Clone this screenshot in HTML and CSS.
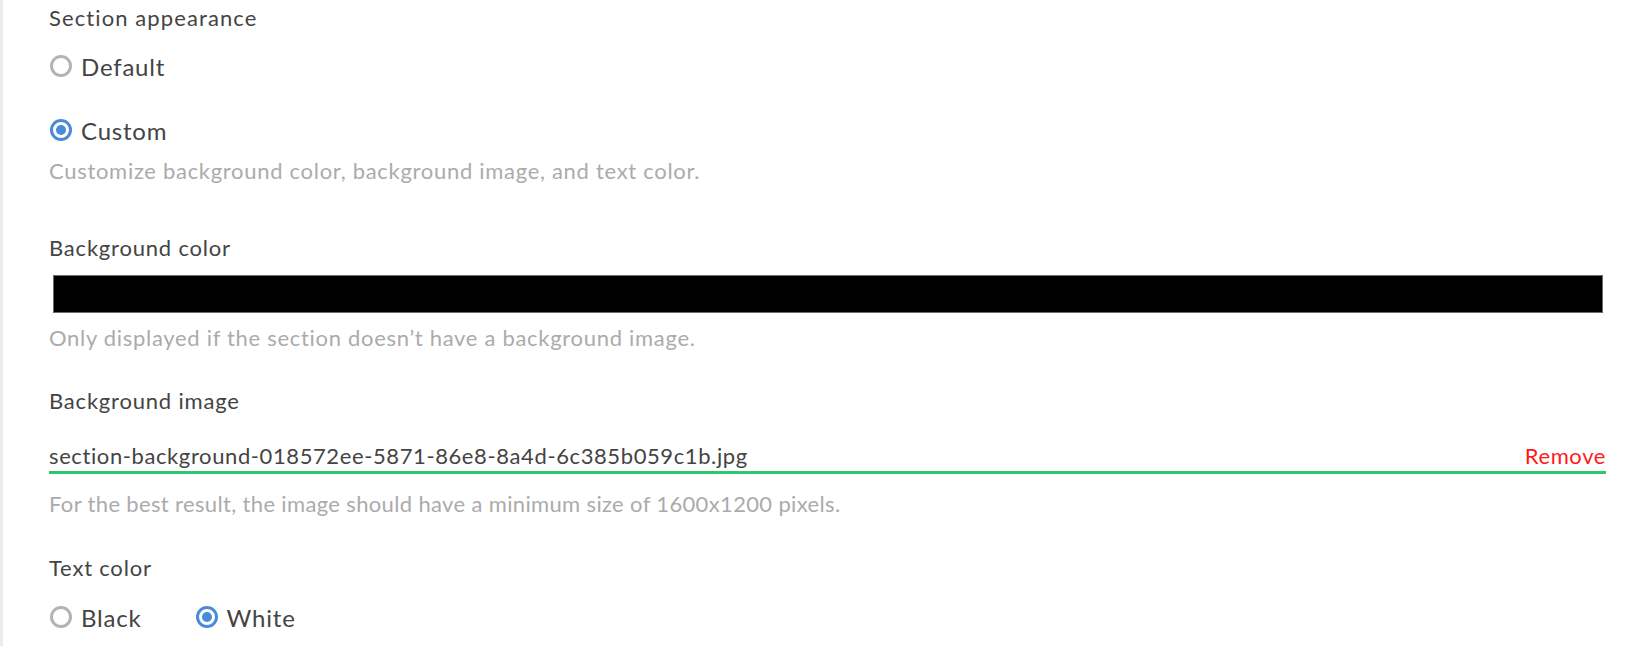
FILE: index.html
```html
<!DOCTYPE html>
<html lang="en">
<head>
    <meta charset="UTF-8">
    <meta name="viewport" content="width=device-width, initial-scale=1.0">
    <title>Section appearance</title>
    <link rel="stylesheet" href="styles.css">
</head>
<body>
    <div class="panel">
        <div class="field-label first">Section appearance</div>

        <label class="radio-row row-default">
            <span class="radio"></span>
            <span class="radio-text">Default</span>
        </label>
        <label class="radio-row row-custom">
            <span class="radio checked"></span>
            <span class="radio-text">Custom</span>
        </label>
        <div class="hint hint-custom">Customize background color, background image, and text color.</div>

        <div class="field-label label-color">Background color</div>
        <div class="color-swatch"></div>
        <div class="hint hint-color">Only displayed if the section doesn’t have a background image.</div>

        <div class="field-label label-image">Background image</div>
        <div class="file-row">
            <span class="file-name">section-background-018572ee-5871-86e8-8a4d-6c385b059c1b.jpg</span>
            <a class="remove" href="#">Remove</a>
        </div>
        <div class="hint hint-image">For the best result, the image should have a minimum size of 1600x1200 pixels.</div>

        <div class="field-label label-text">Text color</div>
        <div class="radio-inline">
            <label class="radio-row">
                <span class="radio"></span>
                <span class="radio-text">Black</span>
            </label>
            <label class="radio-row">
                <span class="radio checked"></span>
                <span class="radio-text">White</span>
            </label>
        </div>
    </div>
</body>
</html>
```

FILE: styles.css
```css
body {
    margin: 0;
    font-family: Lato, "Open Sans", Arial, sans-serif;
    color: #444;
    background: #fff;
}
.panel {
    border-left: 3px solid #ececec;
    padding: 0 42px 0 46px;
    min-height: 100vh;
    box-sizing: border-box;
    display: flex;
    flex-direction: column;
}
.field-label {
    font-size: 22px;
    line-height: 24px;
    letter-spacing: 0.8px;
    color: #444;
}
.first {
    margin-top: 6px;
    letter-spacing: 1.1px;
}
.radio-row {
    display: flex;
    align-items: center;
    height: 30px;
    cursor: pointer;
}
.radio {
    width: 22px;
    height: 22px;
    box-sizing: border-box;
    border: 3px solid #b3b3b3;
    border-radius: 50%;
    margin: 0 9px 0 1px;
    position: relative;
    flex-shrink: 0;
}
.radio.checked {
    border-color: #4a8ad9;
}
.radio.checked::after {
    content: "";
    position: absolute;
    left: 3px;
    top: 3px;
    width: 10px;
    height: 10px;
    border-radius: 50%;
    background: #4a8ad9;
}
.radio-text {
    font-size: 24px;
    letter-spacing: 0.8px;
    color: #444;
}
.row-default {
    margin-top: 21px;
}
.row-custom {
    margin-top: 34px;
}
.hint {
    font-size: 22px;
    line-height: 24px;
    letter-spacing: 0.7px;
    color: #ababab;
}
.hint-custom {
    margin-top: 14px;
}
.label-color {
    margin-top: 53px;
}
.color-swatch {
    margin: 15px 3px 0 4px;
    height: 38px;
    box-sizing: border-box;
    background: #000;
    border: 1px solid #6b6b6b;
}
.hint-color {
    margin-top: 13px;
}
.label-image {
    margin-top: 39px;
}
.file-row {
    margin-top: 26px;
    display: flex;
    justify-content: space-between;
    align-items: center;
    height: 32px;
    border-bottom: 3px solid #2dc76d;
}
.file-name {
    font-size: 22px;
    letter-spacing: 0.6px;
    color: #444;
}
.remove {
    font-size: 22px;
    letter-spacing: 0.6px;
    color: #ff1a1a;
    text-decoration: none;
}
.hint-image {
    margin-top: 18px;
    letter-spacing: 0.35px;
}
.label-text {
    margin-top: 40px;
}
.radio-inline {
    margin-top: 22px;
    display: flex;
    gap: 53px;
}
```
